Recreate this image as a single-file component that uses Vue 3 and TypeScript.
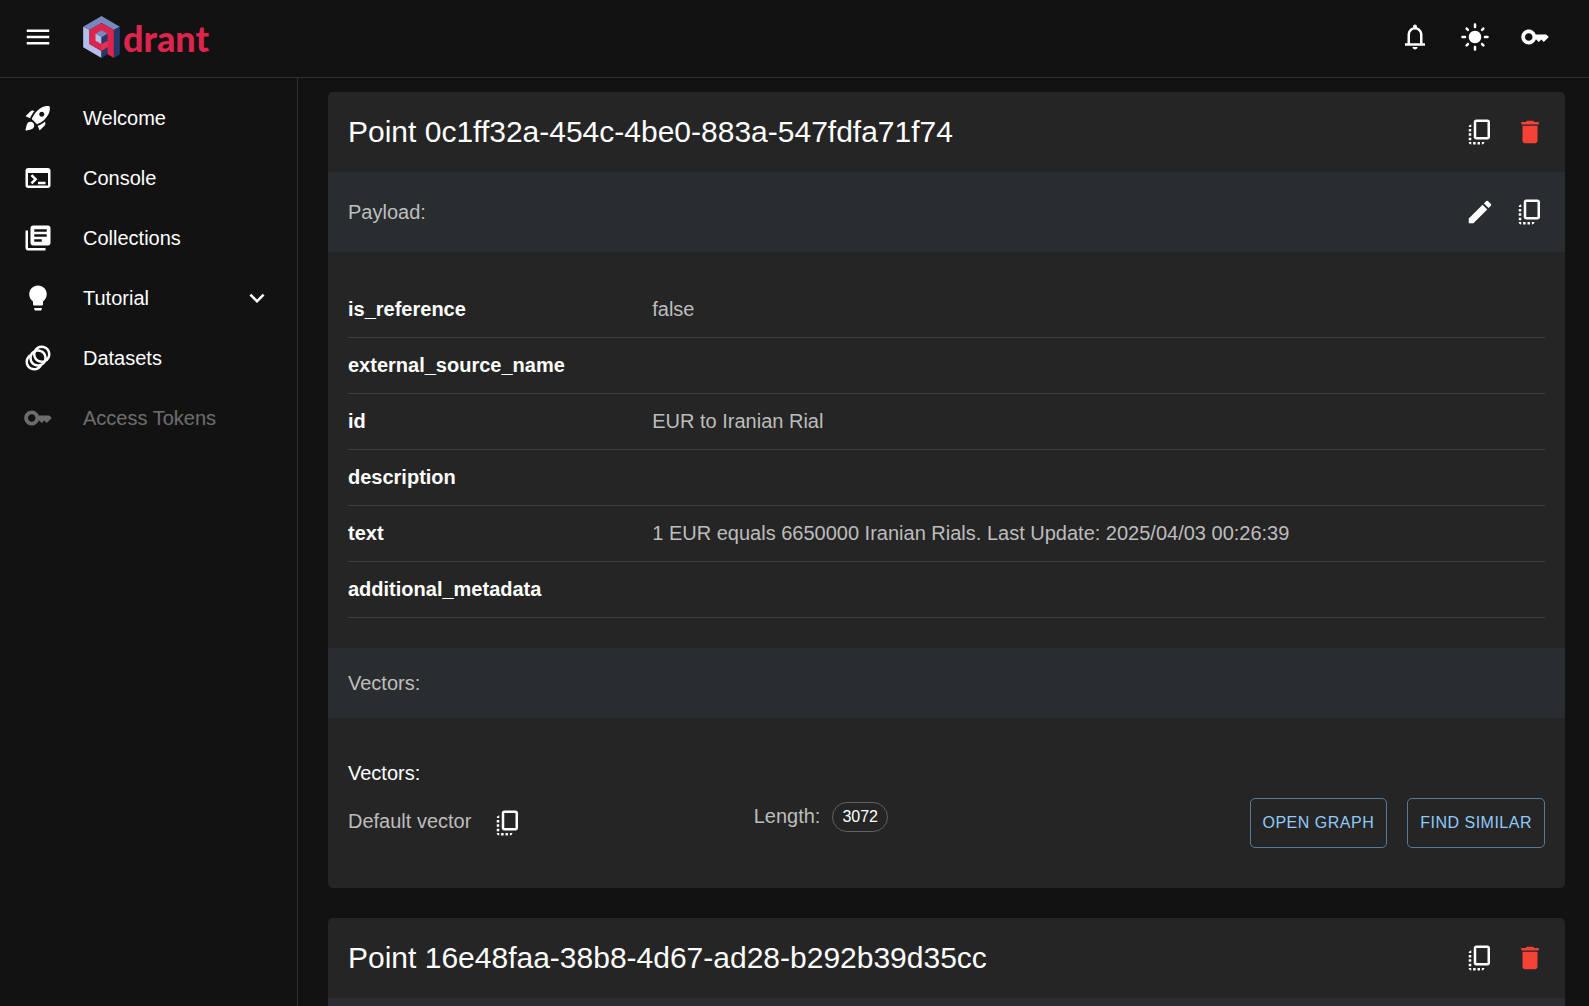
<script setup lang="ts">
import { ref } from 'vue'

interface NavItem {
  label: string
  icon: string
  disabled?: boolean
  expandable?: boolean
}

interface Point {
  id: string
  payload: [string, string][]
  vectorLength?: number
}

const icons: Record<string, string> = {
  menu: 'M3 18h18v-2H3v2zm0-5h18v-2H3v2zm0-7v2h18V6H3z',
  bell: 'M4 19v-2h2v-7q0-2.075 1.25-3.687T10.5 4.2v-.7q0-.625.438-1.062T12 2t1.063.438T13.5 3.5v.7q2 .5 3.25 2.113T18 10v7h2v2H4Zm8 3q-.825 0-1.412-.587T10 20h4q0 .825-.587 1.413T12 22Zm-4-5h8v-7q0-1.65-1.175-2.825T12 6q-1.65 0-2.825 1.175T8 10v7Z',
  sun: 'M12 7c-2.76 0-5 2.24-5 5s2.24 5 5 5 5-2.24 5-5-2.24-5-5-5zM2 13h2c.55 0 1-.45 1-1s-.45-1-1-1H2c-.55 0-1 .45-1 1s.45 1 1 1zm18 0h2c.55 0 1-.45 1-1s-.45-1-1-1h-2c-.55 0-1 .45-1 1s.45 1 1 1zM11 2v2c0 .55.45 1 1 1s1-.45 1-1V2c0-.55-.45-1-1-1s-1 .45-1 1zm0 18v2c0 .55.45 1 1 1s1-.45 1-1v-2c0-.55-.45-1-1-1s-1 .45-1 1zM5.99 4.58c-.39-.39-1.03-.39-1.41 0-.39.39-.39 1.03 0 1.41l1.06 1.06c.39.39 1.03.39 1.41 0s.39-1.03 0-1.41L5.99 4.58zm12.37 12.37c-.39-.39-1.03-.39-1.41 0-.39.39-.39 1.03 0 1.41l1.06 1.06c.39.39 1.03.39 1.41 0 .39-.39.39-1.03 0-1.41l-1.06-1.06zm1.06-10.96c.39-.39.39-1.03 0-1.41-.39-.39-1.03-.39-1.41 0l-1.06 1.06c-.39.39-.39 1.03 0 1.41s1.03.39 1.41 0l1.06-1.06zM7.05 18.36c.39-.39.39-1.03 0-1.41-.39-.39-1.03-.39-1.41 0l-1.06 1.06c-.39.39-.39 1.03 0 1.41s1.03.39 1.41 0l1.06-1.06z',
  key: 'M21 10h-8.35C11.83 7.67 9.61 6 7 6c-3.31 0-6 2.69-6 6s2.69 6 6 6c2.61 0 4.83-1.67 5.65-4H13l2 2 2-2 2 2 4-4.04L21 10zM7 15c-1.65 0-3-1.35-3-3s1.35-3 3-3 3 1.35 3 3-1.35 3-3 3z',
  rocket: 'M9.19 6.35c-2.04 2.29-3.44 5.58-3.57 5.89L2 10.69l4.05-4.05c.47-.47 1.15-.68 1.81-.55l1.33.26zM11.17 17s3.74-1.55 5.89-3.7c5.4-5.4 4.5-9.62 4.21-10.57-.95-.3-5.17-1.19-10.57 4.21C8.55 9.09 7 12.83 7 12.83L11.17 17zm6.48-2.19c-2.29 2.04-5.58 3.44-5.89 3.57L13.31 22l4.05-4.05c.47-.47.68-1.15.55-1.81l-.26-1.33zM9 18c0 .83-.34 1.58-.88 2.12C6.94 21.3 2 22 2 22s.7-4.94 1.88-6.12C4.42 15.34 5.17 15 6 15c1.66 0 3 1.34 3 3zm4-9c0-1.1.9-2 2-2s2 .9 2 2-.9 2-2 2-2-.9-2-2z',
  terminal: 'M20 4H4c-1.11 0-2 .9-2 2v12c0 1.1.89 2 2 2h16c1.1 0 2-.9 2-2V6c0-1.1-.89-2-2-2zm0 14H4V8h16v10zm-2-1h-6v-2h6v2zM7.5 17l-1.41-1.41L8.67 13l-2.59-2.59L7.5 9l4 4-4 4z',
  library: 'M4 6H2v14c0 1.1.9 2 2 2h14v-2H4V6zm16-4H8c-1.1 0-2 .9-2 2v12c0 1.1.9 2 2 2h12c1.1 0 2-.9 2-2V4c0-1.1-.9-2-2-2zm-1 9H9V9h10v2zm-4 4H9v-2h6v2zm4-8H9V5h10v2z',
  bulb: 'M9 21c0 .5.4 1 1 1h4c.6 0 1-.5 1-1v-1H9v1zm3-19C8.1 2 5 5.1 5 9c0 2.4 1.2 4.5 3 5.7V17c0 .5.4 1 1 1h6c.6 0 1-.5 1-1v-2.3c1.8-1.3 3-3.4 3-5.7 0-3.9-3.1-7-7-7z',
  rings: 'M15 2c-2.71 0-5.05 1.54-6.22 3.78-1.28.67-2.34 1.72-3 3C3.54 9.95 2 12.29 2 15c0 3.87 3.13 7 7 7 2.71 0 5.05-1.54 6.22-3.78 1.28-.67 2.34-1.72 3-3C20.46 14.05 22 11.71 22 9c0-3.87-3.13-7-7-7zM9 20c-2.76 0-5-2.24-5-5 0-1.12.37-2.16 1-3 0 3.87 3.13 7 7 7-.84.63-1.88 1-3 1zm3-3c-2.76 0-5-2.24-5-5 0-1.12.37-2.16 1-3 0 3.86 3.13 6.99 7 7-.84.63-1.88 1-3 1zm4.7-3.3c-.53.19-1.1.3-1.7.3-2.76 0-5-2.24-5-5 0-.6.11-1.17.3-1.7.53-.19 1.1-.3 1.7-.3 2.76 0 5 2.24 5 5 0 .6-.11 1.17-.3 1.7zM19 12c0-3.86-3.13-6.99-7-7 .84-.63 1.87-1 3-1 2.76 0 5 2.24 5 5 0 1.12-.37 2.16-1 3z',
  chevron: 'M16.59 8.59 12 13.17 7.41 8.59 6 10l6 6 6-6z',
  copy: 'M18 2H9c-1.1 0-2 .9-2 2v12c0 1.1.9 2 2 2h9c1.1 0 2-.9 2-2V4c0-1.1-.9-2-2-2zm0 14H9V4h9v12zM3 15v-2h2v2H3zm0-5.5h2v2H3v-2zM10 20h2v2h-2v-2zm-7-1.5v-2h2v2H3zM5 22c-1.1 0-2-.9-2-2h2v2zm3.5 0h-2v-2h2v2zm5 0v-2h2c0 1.1-.9 2-2 2zM5 6v2H3c0-1.1.9-2 2-2z',
  trash: 'M6 19c0 1.1.9 2 2 2h8c1.1 0 2-.9 2-2V7H6v12zM19 4h-3.5l-1-1h-5l-1 1H5v2h14V4z',
  pencil: 'M3 17.25V21h3.75L17.81 9.94l-3.75-3.75L3 17.25zM20.71 7.04c.39-.39.39-1.02 0-1.41l-2.34-2.34a.9959.9959 0 0 0-1.41 0l-1.83 1.83 3.75 3.75 1.83-1.83z',
}

const navItems: NavItem[] = [
  { label: 'Welcome', icon: 'rocket' },
  { label: 'Console', icon: 'terminal' },
  { label: 'Collections', icon: 'library' },
  { label: 'Tutorial', icon: 'bulb', expandable: true },
  { label: 'Datasets', icon: 'rings' },
  { label: 'Access Tokens', icon: 'key', disabled: true },
]

const points = ref<Point[]>([
  {
    id: '0c1ff32a-454c-4be0-883a-547fdfa71f74',
    payload: [
      ['is_reference', 'false'],
      ['external_source_name', ''],
      ['id', 'EUR to Iranian Rial'],
      ['description', ''],
      ['text', '1 EUR equals 6650000 Iranian Rials. Last Update: 2025/04/03 00:26:39'],
      ['additional_metadata', ''],
    ],
    vectorLength: 3072,
  },
  { id: '16e48faa-38b8-4d67-ad28-b292b39d35cc', payload: [] },
])

function removePoint(id: string) {
  points.value = points.value.filter((p) => p.id !== id)
}
</script>

<template>
  <div class="app">
    <header class="topbar">
      <button class="icon-btn" type="button" aria-label="Toggle menu">
        <svg class="icon" viewBox="0 0 24 24"><path :d="icons.menu" /></svg>
      </button>
      <a class="logo" href="#">
        <svg class="logo-mark" viewBox="0 0 110 126" aria-hidden="true">
          <path fill="#7589be" d="M55 0 110 32 92 42 55 21 19 42 0 32z" />
          <path fill="#b2bfe8" d="M0 32 19 42V84L55 105V126L0 94z" />
          <path fill="#24386c" d="M110 32V115L92 126V42zM55 105 73 94V115L55 126z" />
          <path fill="#dc244c" d="M55 21 92 42V126L73 115V94L55 105 19 84V42z" />
          <path fill="#ff516b" d="M55 84V105L73 94V74z" opacity=".3" />
          <path fill="#7589be" d="M55 43 73 53 55 64 37 53z" />
          <path fill="#b2bfe8" d="M37 53 55 64V84L37 74z" />
          <path fill="#24386c" d="M73 53V74L55 84V64z" />
        </svg>
        <span class="logo-text">drant</span>
      </a>
      <div class="topbar-actions">
        <button class="icon-btn" type="button" aria-label="Notifications">
          <svg class="icon" viewBox="0 0 24 24"><path :d="icons.bell" /></svg>
        </button>
        <button class="icon-btn" type="button" aria-label="Switch theme">
          <svg class="icon" viewBox="0 0 24 24"><path :d="icons.sun" /></svg>
        </button>
        <button class="icon-btn" type="button" aria-label="API key">
          <svg class="icon" viewBox="0 0 24 24"><path :d="icons.key" /></svg>
        </button>
      </div>
    </header>

    <div class="body">
      <nav class="sidebar">
        <a
          v-for="item in navItems"
          :key="item.label"
          class="nav-item"
          :class="{ disabled: item.disabled }"
          :aria-disabled="item.disabled"
          href="#"
        >
          <svg class="icon" viewBox="0 0 24 24"><path :d="icons[item.icon]" /></svg>
          <span class="nav-label">{{ item.label }}</span>
          <svg v-if="item.expandable" class="icon" viewBox="0 0 24 24"><path :d="icons.chevron" /></svg>
        </a>
      </nav>

      <main class="content">
        <article v-for="point in points" :key="point.id" class="card">
          <header class="card-row">
            <h2>Point {{ point.id }}</h2>
            <button class="icon-btn" type="button" aria-label="Copy point">
              <svg class="icon" viewBox="0 0 24 24"><path :d="icons.copy" /></svg>
            </button>
            <button class="icon-btn danger" type="button" aria-label="Delete point" @click="removePoint(point.id)">
              <svg class="icon" viewBox="0 0 24 24"><path :d="icons.trash" /></svg>
            </button>
          </header>

          <div class="card-row band">
            <template v-if="point.payload.length">
              <h3>Payload:</h3>
              <button class="icon-btn" type="button" aria-label="Edit payload">
                <svg class="icon" viewBox="0 0 24 24"><path :d="icons.pencil" /></svg>
              </button>
              <button class="icon-btn" type="button" aria-label="Copy payload">
                <svg class="icon" viewBox="0 0 24 24"><path :d="icons.copy" /></svg>
              </button>
            </template>
          </div>

          <div v-if="point.payload.length" class="payload">
            <table>
              <tbody>
                <tr v-for="[name, value] in point.payload" :key="name">
                  <th scope="row">{{ name }}</th>
                  <td>{{ value }}</td>
                </tr>
              </tbody>
            </table>
          </div>

          <template v-if="point.vectorLength">
            <div class="card-row band short">
              <h3>Vectors:</h3>
            </div>
            <section class="vectors">
              <h4>Vectors:</h4>
              <div class="vector-grid">
                <div class="vector-name">
                  <span>Default vector</span>
                  <button class="icon-btn" type="button" aria-label="Copy vector">
                    <svg class="icon" viewBox="0 0 24 24"><path :d="icons.copy" /></svg>
                  </button>
                </div>
                <div class="vector-length">
                  <span>Length:</span>
                  <span class="chip">{{ point.vectorLength }}</span>
                </div>
                <div class="vector-actions">
                  <button class="outlined" type="button">Open graph</button>
                  <button class="outlined" type="button">Find similar</button>
                </div>
              </div>
            </section>
          </template>
        </article>
      </main>
    </div>
  </div>
</template>

<style>
body {
  margin: 0;
  background: #121212;
}
</style>

<style scoped>
.app {
  display: flex;
  flex-direction: column;
  height: 100vh;
  background: #121212;
  color: #fff;
  font-family: "Liberation Sans", Arial, sans-serif;
  font-size: 20px;
  line-height: 30px;
}

.icon {
  display: block;
  flex: none;
  width: 30px;
  height: 30px;
  fill: currentColor;
}

.icon-btn {
  flex: none;
  padding: 10px;
  border: 0;
  border-radius: 50%;
  background: none;
  color: inherit;
  cursor: pointer;
}

.danger {
  color: #f44336;
}

.topbar {
  box-sizing: border-box;
  flex: none;
  display: flex;
  align-items: center;
  height: 78px;
  padding: 0 29px 3px 13px;
  border-bottom: 1px solid #2f2f2f;
}

.logo {
  display: flex;
  align-items: center;
  gap: 3px;
  margin-left: 20px;
  color: #dc244c;
  text-decoration: none;
}

.logo-mark {
  display: block;
  width: 37px;
  height: 42px;
}

.logo-text {
  padding-top: 2px;
  font-family: Lato, sans-serif;
  font-size: 36px;
  font-weight: 900;
  line-height: 42px;
}

.topbar-actions {
  display: flex;
  gap: 10px;
  margin-left: auto;
}

.body {
  flex: 1;
  display: flex;
  min-height: 0;
}

.sidebar {
  box-sizing: border-box;
  flex: none;
  width: 298px;
  padding-top: 10px;
  border-right: 1px solid #2f2f2f;
}

.nav-item {
  display: flex;
  align-items: center;
  gap: 30px;
  height: 60px;
  padding: 0 25px 0 23px;
  color: inherit;
  text-decoration: none;
}

.nav-label {
  flex: 1;
}

.disabled {
  opacity: 0.38;
}

.content {
  flex: 1;
  min-width: 0;
  overflow-y: auto;
  scrollbar-width: none;
  padding: 14px 24px 30px 30px;
}

.card {
  margin-bottom: 30px;
  border-radius: 5px;
  background: #252525;
}

.card-row {
  display: flex;
  align-items: center;
  min-height: 80px;
  padding: 0 10px 0 20px;
}

.band {
  background: #292d30;
  color: #bebebe;
}

.band .icon-btn {
  color: #fff;
}

.short {
  min-height: 70px;
}

h2,
h3,
h4 {
  flex: 1;
  margin: 0;
  font-size: 20px;
  font-weight: 400;
}

h2 {
  font-size: 30px;
  line-height: 40px;
}

.payload {
  padding: 30px 20px;
}

table {
  width: 100%;
  border-collapse: separate;
  border-spacing: 0;
  table-layout: fixed;
}

th,
td {
  box-sizing: border-box;
  height: 56px;
  padding: 0 0 2px;
  border-bottom: 1px solid #3f3f3f;
  text-align: left;
}

th {
  width: 25%;
}

td {
  padding-left: 5px;
  color: #bdbdbd;
}

.vectors {
  padding: 40px 20px;
}

.vector-grid {
  display: grid;
  grid-template-columns: repeat(3, 1fr);
  gap: 20px;
  margin-top: 10px;
  color: #bdbdbd;
}

.vector-name {
  display: flex;
  align-items: center;
  gap: 12px;
}

.vector-name span {
  padding-bottom: 4px;
}

.vector-name .icon-btn {
  color: #fff;
}

.vector-length {
  display: flex;
  align-items: center;
  align-self: start;
  gap: 12px;
  padding-top: 2px;
}

.chip {
  box-sizing: border-box;
  height: 30px;
  margin-top: 2px;
  padding: 0 9px;
  border: 1px solid #616161;
  border-radius: 15px;
  color: #fff;
  font-size: 16px;
  line-height: 28px;
}

.vector-actions {
  display: flex;
  justify-content: flex-end;
  gap: 20px;
}

.outlined {
  height: 50px;
  padding: 0 12px;
  border: 1px solid #5a7a94;
  border-radius: 5px;
  background: none;
  color: #90caf9;
  font-family: inherit;
  font-size: 16px;
  letter-spacing: 0.5px;
  text-transform: uppercase;
  white-space: nowrap;
  cursor: pointer;
}
</style>
